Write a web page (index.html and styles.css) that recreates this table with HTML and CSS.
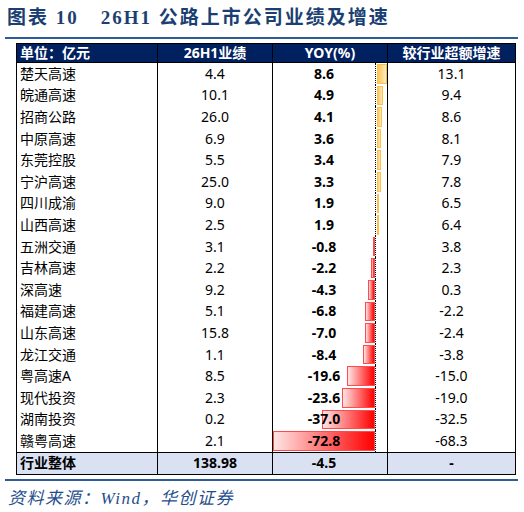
FILE: index.html
```html
<!DOCTYPE html>
<html>
	<head>
		<meta charset="UTF-8">
		<title>26H1公路上市公司业绩及增速</title>
		<link rel="stylesheet" href="styles.css">
	</head>
	<body>
		<div id="page">
			<h1 class="title"><span class="no">图表 10</span><span>26H1 公路上市公司业绩及增速</span></h1>
			<div class="rule"></div>
			<table class="sheet">
				<colgroup>
					<col class="c-name">
					<col class="c-val">
					<col class="c-yoy">
					<col class="c-ex">
				</colgroup>
				<thead>
					<tr><th class="name">单位：亿元</th><th>26H1业绩</th><th>YOY(%)</th><th>较行业超额增速</th></tr>
				</thead>
				<tbody>
					<tr><td class="name">楚天高速</td><td>4.4</td><td class="yoy"><i class="bar up" style="width:10px"></i><b>8.6</b></td><td>13.1</td></tr>
					<tr><td class="name">皖通高速</td><td>10.1</td><td class="yoy"><i class="bar up" style="width:6px"></i><b>4.9</b></td><td>9.4</td></tr>
					<tr><td class="name">招商公路</td><td>26.0</td><td class="yoy"><i class="bar up" style="width:5px"></i><b>4.1</b></td><td>8.6</td></tr>
					<tr><td class="name">中原高速</td><td>6.9</td><td class="yoy"><i class="bar up" style="width:4px"></i><b>3.6</b></td><td>8.1</td></tr>
					<tr><td class="name">东莞控股</td><td>5.5</td><td class="yoy"><i class="bar up" style="width:4px"></i><b>3.4</b></td><td>7.9</td></tr>
					<tr><td class="name">宁沪高速</td><td>25.0</td><td class="yoy"><i class="bar up" style="width:4px"></i><b>3.3</b></td><td>7.8</td></tr>
					<tr><td class="name">四川成渝</td><td>9.0</td><td class="yoy"><i class="bar up" style="width:2px"></i><b>1.9</b></td><td>6.5</td></tr>
					<tr><td class="name">山西高速</td><td>2.5</td><td class="yoy"><i class="bar up" style="width:2px"></i><b>1.9</b></td><td>6.4</td></tr>
					<tr><td class="name">五洲交通</td><td>3.1</td><td class="yoy"><i class="bar down" style="width:1px"></i><b>-0.8</b></td><td>3.8</td></tr>
					<tr><td class="name">吉林高速</td><td>2.2</td><td class="yoy"><i class="bar down" style="width:4px"></i><b>-2.2</b></td><td>2.3</td></tr>
					<tr><td class="name">深高速</td><td>9.2</td><td class="yoy"><i class="bar down" style="width:7px"></i><b>-4.3</b></td><td>0.3</td></tr>
					<tr><td class="name">福建高速</td><td>5.1</td><td class="yoy"><i class="bar down" style="width:10px"></i><b>-6.8</b></td><td>-2.2</td></tr>
					<tr><td class="name">山东高速</td><td>15.8</td><td class="yoy"><i class="bar down" style="width:10px"></i><b>-7.0</b></td><td>-2.4</td></tr>
					<tr><td class="name">龙江交通</td><td>1.1</td><td class="yoy"><i class="bar down" style="width:12px"></i><b>-8.4</b></td><td>-3.8</td></tr>
					<tr><td class="name">粤高速A</td><td>8.5</td><td class="yoy"><i class="bar down" style="width:28px"></i><b>-19.6</b></td><td>-15.0</td></tr>
					<tr><td class="name">现代投资</td><td>2.3</td><td class="yoy"><i class="bar down" style="width:33px"></i><b>-23.6</b></td><td>-19.0</td></tr>
					<tr><td class="name">湖南投资</td><td>0.2</td><td class="yoy"><i class="bar down" style="width:53px"></i><b>-37.0</b></td><td>-32.5</td></tr>
					<tr><td class="name">赣粤高速</td><td>2.1</td><td class="yoy"><i class="bar down" style="width:102px"></i><b>-72.8</b></td><td>-68.3</td></tr>
				</tbody>
				<tfoot>
					<tr><td class="name">行业整体</td><td>138.98</td><td class="yoy"><b>-4.5</b></td><td>-</td></tr>
				</tfoot>
			</table>
			<div class="rule low"></div>
			<p class="source">资料来源：Wind，华创证券</p>
		</div>
	</body>
</html>
```

FILE: styles.css
```css
body {
	margin: 0;
	background-color: #FFF;
}
#page {
	width: 524px;
	padding-top: 4px;
}
.title {
	margin: 0 0 0 7px;
	height: 32px;
	font-family: "Liberation Serif", "Noto Sans CJK SC", serif;
	font-size: 19px;
	font-weight: bold;
	line-height: 28px;
	letter-spacing: 2px;
	color: #1B3F73;
	white-space: nowrap;
}
.title .no {
	margin-right: 22px;
}
.rule {
	width: 513px;
	height: 2px;
	margin: 1px 0 0 5px;
	background-color: #2E5C96;
}
.rule.low {
	margin-top: 4px;
}
.sheet {
	margin: 4px 0 0 16px;
	width: 499px;
	table-layout: fixed;
	border-collapse: collapse;
	border: 1px solid #000;
	font-family: "Noto Sans", "Noto Sans CJK SC", sans-serif;
	font-size: 14px;
	color: #000;
}
.sheet .c-name { width: 141px; }
.sheet .c-val { width: 115px; }
.sheet .c-yoy { width: 115px; }
.sheet .c-ex { width: 128px; }
.sheet th,
.sheet td {
	padding: 0;
	border-left: 1px solid #000;
	border-right: 1px solid #000;
	text-align: center;
	white-space: nowrap;
	line-height: 18px;
}
.sheet th {
	height: 18px;
	background-color: #002060;
	color: #FFF;
	font-weight: bold;
	border-bottom: 1px solid #000;
}
.sheet tbody td {
	height: 21.6px;
}
.sheet tfoot td {
	height: 21px;
	border-top: 1px solid #000;
	background-color: #D9E1F2;
	font-weight: bold;
}
.sheet .name {
	text-align: left;
	padding-left: 3px;
}
.sheet .yoy {
	position: relative;
	padding-right: 12px;
}
.sheet .yoy b {
	position: relative;
	font-weight: bold;
}
.sheet tbody .yoy::after {
	content: "";
	position: absolute;
	top: 0;
	bottom: 0;
	right: 11px;
	border-left: 1px dotted #000;
}
.bar {
	position: absolute;
	top: 1px;
	bottom: 1px;
	box-sizing: border-box;
}
.bar.up {
	left: 104px;
	border: 1px solid #FFC04A;
	background: linear-gradient(to right, #FFC651, #FFEBC4);
}
.bar.down {
	right: 12px;
	border: 1px solid #FF4B4B;
	background: linear-gradient(to right, #FFE4E4, #FF0000);
}
.source {
	margin: 7px 0 0 8px;
	font-family: "Liberation Serif", "Noto Sans CJK SC", serif;
	font-style: italic;
	font-size: 17px;
	line-height: 22px;
	letter-spacing: 1.5px;
	color: #1F4E8C;
}
```
